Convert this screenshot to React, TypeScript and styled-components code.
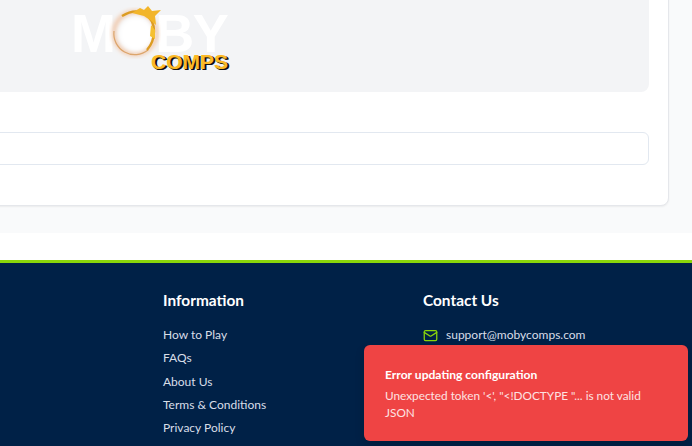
import styled, { createGlobalStyle } from 'styled-components';
import { Mail } from 'lucide-react';

const GlobalStyle = createGlobalStyle`
  html, body {
    margin: 0;
    padding: 0;
    background: #ffffff;
    font-family: Lato, "Noto Sans", "Liberation Sans", sans-serif;
  }
`;

const Viewport = styled.div`
  width: 692px;
  height: 446px;
  overflow: hidden;
  position: relative;
`;

const Main = styled.main`
  height: 233px;
  background: #f9fafb;
  padding-right: 23px;
  box-sizing: border-box;
  display: flex;
  flex-direction: column;
  justify-content: flex-end;
  align-items: flex-end;
  padding-bottom: 27px;
`;

const Card = styled.section`
  width: 1036px;
  flex-shrink: 0;
  background: #ffffff;
  border: 1px solid #e5e7eb;
  border-radius: 8px;
  box-shadow: 0 1px 2px rgba(0, 0, 0, 0.06);
  padding: 0 19px 40px;
  box-sizing: border-box;
`;

const LogoPanel = styled.div`
  height: 140px;
  background: #f3f4f6;
  border-radius: 8px;
  display: flex;
  align-items: flex-end;
  justify-content: center;
  margin-bottom: 40px;
  padding-bottom: 19px;
  box-sizing: border-box;
`;

const Logo = styled.div`
  position: relative;
  width: 156px;
  height: 62px;
`;

const LogoWord = styled.div`
  font-family: "Liberation Sans", sans-serif;
  font-weight: 700;
  font-size: 54px;
  line-height: 44px;
  letter-spacing: -1.4px;
  margin-left: -2px;
  color: #ffffff;
  white-space: nowrap;
`;

const LogoRing = styled.svg`
  position: absolute;
  left: 35px;
  top: -10px;
`;

const LogoSub = styled.div`
  position: absolute;
  right: 1px;
  bottom: 2px;
  font-family: "Liberation Sans", sans-serif;
  font-weight: 700;
  font-size: 21px;
  line-height: 18px;
  color: #fbb926;
  text-shadow: 1px 1px 0 #111111, 2px 1px 0 #111111;
`;

const FieldBox = styled.div`
  height: 33px;
  background: #ffffff;
  border: 1px solid #e2e8f0;
  border-radius: 6px;
  box-sizing: border-box;
`;

const Gap = styled.div`
  height: 27px;
  background: #ffffff;
`;

const Footer = styled.footer`
  height: 186px;
  background: #002147;
  border-top: 3px solid #8ad60a;
  box-sizing: border-box;
  padding: 26px 0 0 163px;
  display: grid;
  grid-template-columns: 260px 1fr;
  color: #ffffff;
`;

const Column = styled.div`
  display: flex;
  flex-direction: column;
`;

const Heading = styled.h3`
  margin: 0 0 15px;
  font-size: 15.4px;
  line-height: 22px;
  font-weight: 700;
  color: #ffffff;
`;

const LinkList = styled.ul`
  list-style: none;
  margin: 0;
  padding: 0;
  display: flex;
  flex-direction: column;
  gap: 5px;
`;

const LinkItem = styled.li`
  font-size: 12px;
  line-height: 18.3px;
  color: #d8dee8;
`;

const ContactRow = styled.div`
  display: flex;
  align-items: center;
  gap: 8px;
  font-size: 12px;
  line-height: 18px;
  color: #d8dee8;

  svg {
    color: #8ad60a;
    flex-shrink: 0;
  }
`;

const Toast = styled.div`
  position: absolute;
  left: 364px;
  top: 345px;
  width: 324px;
  height: 96px;
  background: #ef4444;
  border-radius: 6px;
  box-sizing: border-box;
  padding: 21px 21px 0;
  color: #ffffff;
  box-shadow: 0 4px 10px rgba(0, 0, 0, 0.15);
`;

const ToastTitle = styled.div`
  font-size: 12.1px;
  line-height: 18px;
  font-weight: 700;
  margin-bottom: 3px;
`;

const ToastBody = styled.div`
  font-size: 11.8px;
  line-height: 17px;
  color: #fde2e2;
  padding-right: 8px;
`;

const links = ['How to Play', 'FAQs', 'About Us', 'Terms & Conditions', 'Privacy Policy'];

export default function App() {
  return (
    <Viewport>
      <GlobalStyle />
      <Main>
        <Card>
          <LogoPanel>
            <Logo>
              <LogoWord>MOBY</LogoWord>
              <LogoRing width="66" height="66" viewBox="0 0 66 66">
                <defs>
                  <filter id="soft">
                    <feGaussianBlur stdDeviation="2.2" />
                  </filter>
                  <filter id="flame">
                    <feGaussianBlur stdDeviation="0.6" />
                  </filter>
                </defs>
                <circle cx="27" cy="32" r="22" fill="#f3f4f6" />
                <circle cx="27" cy="32" r="21" fill="none" stroke="#f0c4a4" strokeWidth="4" filter="url(#soft)" />
                <circle cx="28" cy="33" r="17" fill="#ffffff" filter="url(#soft)" />
                <path d="M6 30 A21 21 0 0 0 40 49" fill="none" stroke="#dca56c" strokeWidth="1.2" filter="url(#flame)" />
                <path d="M14 15 Q27 7 37 13 Q46 19 46 30 Q46 41 39 49" fill="none" stroke="#dc9c24" strokeWidth="2.4" filter="url(#flame)" />
                <path d="M24 12 L32 7 L36 9 L40 5 L44 10 L53 9 L47 15 L48 24 L42 19 L36 15 Z" fill="#f2b52a" filter="url(#flame)" />
                <path d="M43 24 L47 29 L47 38 L42 35 Z" fill="#f5c030" filter="url(#flame)" />
              </LogoRing>
              <LogoSub>COMPS</LogoSub>
            </Logo>
          </LogoPanel>
          <FieldBox />
        </Card>
      </Main>
      <Gap />
      <Footer>
        <Column>
          <Heading>Information</Heading>
          <LinkList>
            {links.map(link => (
              <LinkItem key={link}>{link}</LinkItem>
            ))}
          </LinkList>
        </Column>
        <Column>
          <Heading>Contact Us</Heading>
          <ContactRow>
            <Mail size={15} />
            support@mobycomps.com
          </ContactRow>
        </Column>
      </Footer>
      <Toast>
        <ToastTitle>Error updating configuration</ToastTitle>
        <ToastBody>Unexpected token '&lt;', "&lt;!DOCTYPE "... is not valid JSON</ToastBody>
      </Toast>
    </Viewport>
  );
}
